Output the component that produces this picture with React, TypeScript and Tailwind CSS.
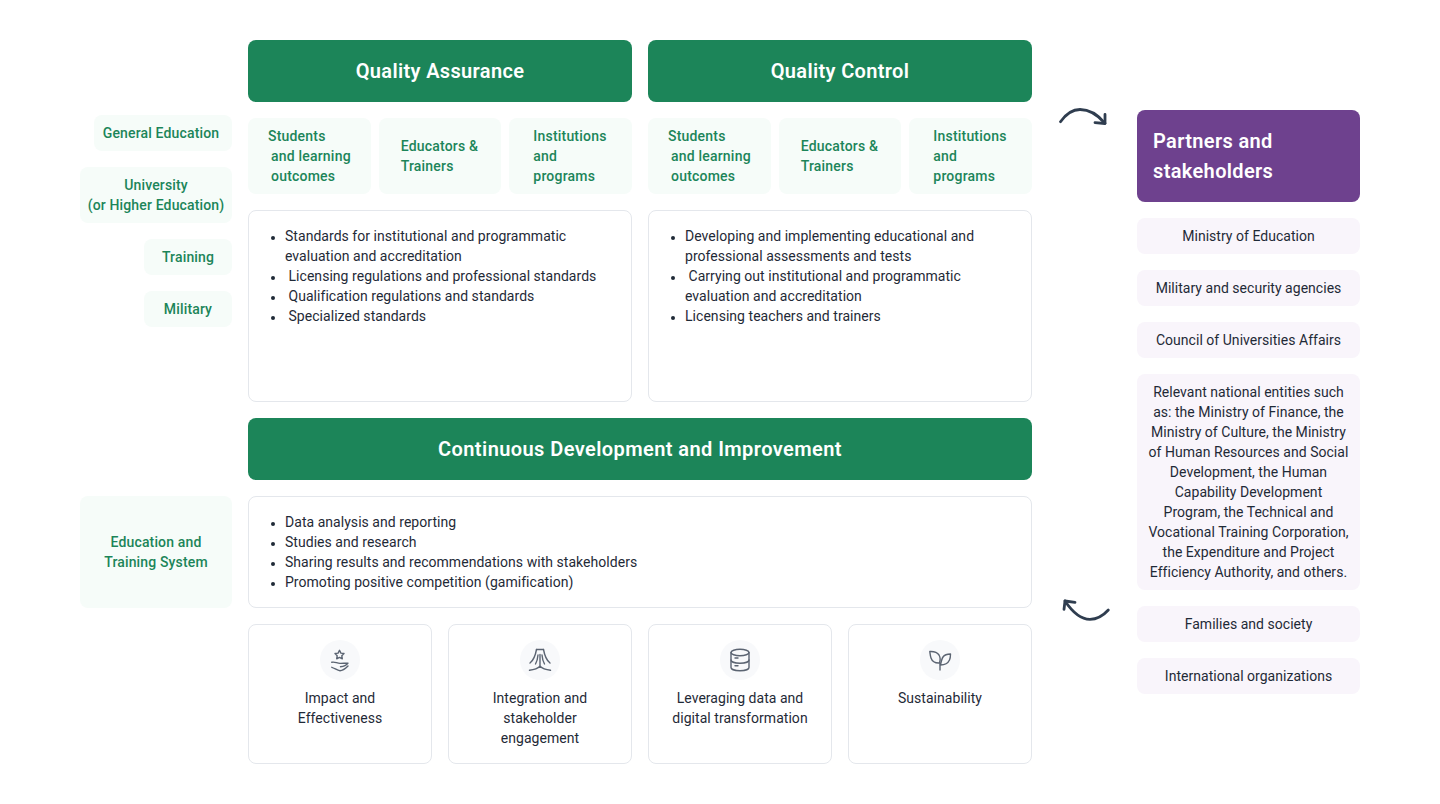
const font = { fontFamily: '"Roboto", "Liberation Sans", sans-serif' };

function HandStar() {
  return (
    <svg width="24" height="24" viewBox="0 0 24 24" fill="none" stroke="#5b6472" strokeWidth="1.4" strokeLinecap="round" strokeLinejoin="round">
      <path d="M11.500 2.300l1.400 2.800 3.100.4-2.200 2.200.5 3.100-2.800-1.400-2.800 1.400.5-3.100L7 5.500l3.100-.4z" />
      <path d="M3.800 14.300c3-.8 5 1 8.200 1.100 3 .1 5.500-.4 8-.2-1.500 2-4.500 3.300-7.500 3.600" />
      <path d="M3.800 19.300c3 .9 5.500 3.400 8.200 3.400 3 0 6-2.700 8-4.700" />
    </svg>
  );
}

function Fountain() {
  return (
    <svg width="24" height="24" viewBox="0 0 24 24" fill="none" stroke="#5b6472" strokeWidth="1.4" strokeLinecap="round" strokeLinejoin="round">
      <path d="M8.500 1.500h7" />
      <path d="M8.500 1.500C7.500 7 6 12 2 15M15.500 1.500c1 5.500 2.500 10.500 6.500 13.500" />
      <path d="M12 6.500V18M10 7c-.3 3.500-1 6.500-2.500 9M14 7c.3 3.500 1 6.500 2.500 9" />
      <path d="M1.500 22.300c4.500-.5 8-1.500 10.500-4 2.500 2.500 6 3.500 10.500 4" />
    </svg>
  );
}

function Db() {
  return (
    <svg width="24" height="24" viewBox="0 0 24 24" fill="none" stroke="#5b6472" strokeWidth="1.4" strokeLinecap="round" strokeLinejoin="round">
      <ellipse cx="12" cy="4.500" rx="9" ry="3.200" />
      <path d="M3 4.500v15c0 1.800 4 3.200 9 3.200s9-1.400 9-3.200v-15" />
      <path d="M3 12c0 1.800 4 3.200 9 3.200s9-1.400 9-3.200" />
      <path d="M7 10h3M7 17.800h3" />
    </svg>
  );
}

function Sprout() {
  return (
    <svg width="24" height="24" viewBox="0 0 24 24" fill="none" stroke="#5b6472" strokeWidth="1.4" strokeLinecap="round" strokeLinejoin="round">
      <path d="M12 22v-7" />
      <path d="M1.800 3.500c3.700-.2 7.200.4 9.200 3.500 1.500 2.500 1.300 5.500.5 8-3.500.2-7.300-1.500-8.500-5-.7-2-.9-4.400-1.200-6.500z" />
      <path d="M22.500 6c-2.800 0-5.800.6-7.500 3-1.300 2-1.900 4.800-2.500 8 3.500 0 7.300-1.300 9-5 .8-1.800 1-4 1-6z" />
    </svg>
  );
}

function Sub({ lines, pad }: { lines: React.ReactNode[]; pad: string }) {
  return (
    <div className={`flex items-center rounded-lg bg-[#f6fcf9] text-sm leading-5 font-medium tracking-[0.2px] whitespace-nowrap text-[#1c8559] ${pad}`}>
      <div>
        {lines.map((l, i) => (
          <div key={i}>{l}</div>
        ))}
      </div>
    </div>
  );
}

function Column({ title, items }: { title: string; items: string[] }) {
  return (
    <div className="flex w-[384px] flex-col gap-4">
      <div className="flex h-[62px] items-center justify-center rounded-lg bg-[#1c8559] text-xl font-semibold tracking-[0.35px] text-white">
        {title}
      </div>
      <div className="grid h-[76px] grid-cols-3 gap-2">
        <Sub
          pad="pl-5"
          lines={[
            "Students",
            <span className="ml-[3px]">and learning</span>,
            <span className="ml-[3px]">outcomes</span>,
          ]}
        />
        <Sub pad="pl-[22px]" lines={["Educators &", "Trainers"]} />
        <Sub pad="pl-6" lines={["Institutions", "and", "programs"]} />
      </div>
      <div className="h-[192px] rounded-lg border border-[#e4e7ec] bg-white px-6 pt-[15px]">
        <ul className="list-disc pl-3 text-sm leading-5 tracking-[0.04px] text-[#1f2a37] marker:text-[12px]">
          {items.map((t) => (
            <li key={t}>{t}</li>
          ))}
        </ul>
      </div>
    </div>
  );
}

function Pillar({ icon, lines }: { icon: React.ReactNode; lines: string[] }) {
  return (
    <div className="flex h-[140px] flex-1 flex-col items-center rounded-lg border border-[#e4e7ec] bg-white pt-[15px] text-center text-sm leading-5 tracking-[0.04px] text-[#1f2a37]">
      <div className="mb-2 flex size-10 items-center justify-center rounded-full bg-[#f8f9fb]">{icon}</div>
      {lines.map((l) => (
        <div key={l}>{l}</div>
      ))}
    </div>
  );
}

function Side({ className, children }: { className: string; children: React.ReactNode }) {
  return (
    <div className={`flex items-center justify-center rounded-lg bg-[#f6fcf9] text-center text-sm leading-5 font-medium tracking-[0.15px] whitespace-nowrap text-[#1c8559] ${className}`}>
      <div>{children}</div>
    </div>
  );
}

function Partner({ children, className = "" }: { children: React.ReactNode; className?: string }) {
  return (
    <div className={`flex items-center justify-center rounded-lg bg-[#f9f5fb] text-center text-sm leading-5 tracking-[0.03px] whitespace-nowrap text-[#1f2a37] ${className}`}>
      <div>{children}</div>
    </div>
  );
}

const entities = [
  "Relevant national entities such",
  "as: the Ministry of Finance, the",
  "Ministry of Culture, the Ministry",
  "of Human Resources and Social",
  "Development, the Human",
  "Capability Development",
  "Program, the Technical and",
  "Vocational Training Corporation,",
  "the Expenditure and Project",
  "Efficiency Authority, and others.",
];

export default function App() {
  return (
    <div style={font} className="flex h-[804px] w-[1440px] bg-white pt-10 pl-20">
      <div className="mr-4 flex w-[152px] flex-col items-end gap-4 pt-[75px]">
        <Side className="h-9 w-[138px] pr-1">General Education</Side>
        <Side className="h-14 w-[152px]">
          University
          <br />
          (or Higher Education)
        </Side>
        <Side className="h-9 w-[88px]">Training</Side>
        <Side className="h-9 w-[88px]">Military</Side>
        <Side className="mt-[153px] h-[112px] w-[152px]">
          Education and
          <br />
          Training System
        </Side>
      </div>

      <div className="flex w-[784px] flex-col gap-4">
        <div className="flex gap-4">
          <Column
            title="Quality Assurance"
            items={[
              "Standards for institutional and programmatic evaluation and accreditation",
              "\u00a0Licensing regulations and professional standards",
              "\u00a0Qualification regulations and standards",
              "\u00a0Specialized standards",
            ]}
          />
          <Column
            title="Quality Control"
            items={[
              "Developing and implementing educational and professional assessments and tests",
              "\u00a0Carrying out institutional and programmatic evaluation and accreditation",
              "Licensing teachers and trainers",
            ]}
          />
        </div>
        <div className="flex h-[62px] items-center justify-center rounded-lg bg-[#1c8559] text-xl font-semibold tracking-[0.42px] text-white">
          Continuous Development and Improvement
        </div>
        <div className="h-[112px] rounded-lg border border-[#e4e7ec] bg-white px-6 pt-[15px]">
          <ul className="list-disc pl-3 text-sm leading-5 tracking-[0.04px] text-[#1f2a37] marker:text-[12px]">
            <li>Data analysis and reporting</li>
            <li>Studies and research</li>
            <li>Sharing results and recommendations with stakeholders</li>
            <li>Promoting positive competition (gamification)</li>
          </ul>
        </div>
        <div className="flex gap-4">
          <Pillar icon={<HandStar />} lines={["Impact and", "Effectiveness"]} />
          <Pillar icon={<Fountain />} lines={["Integration and", "stakeholder", "engagement"]} />
          <Pillar icon={<Db />} lines={["Leveraging data and", "digital transformation"]} />
          <Pillar icon={<Sprout />} lines={["Sustainability"]} />
        </div>
      </div>

      <div className="flex w-[105px] flex-col pt-[66px] pl-[27px]">
        <svg width="50" height="22" viewBox="0 0 50 22" fill="none" stroke="#2f3d4f" strokeWidth="2.800" strokeLinecap="round" strokeLinejoin="round">
          <path d="M1.500 15.700C7 8 13 3.500 21 3.500c10 0 18 5.500 25 13.800" />
          <path d="M36 16.700l10 .8V8.500" />
        </svg>
        <svg className="mt-[468px] ml-[2px]" width="50" height="26" viewBox="0 0 50 26" fill="none" stroke="#2f3d4f" strokeWidth="2.800" strokeLinecap="round" strokeLinejoin="round">
          <path d="M47.300 14c-5 5.500-11 9.300-18.300 9.300C18 23.300 10 14 4 5" />
          <path d="M14 6.300L4 5l-1 8.300" />
        </svg>
      </div>

      <div className="flex w-[223px] flex-col gap-4 pt-[70px]">
        <div className="flex h-[92px] items-center rounded-lg bg-[#6e418e] px-4 text-xl leading-[30px] font-semibold tracking-[0.35px] text-white">
          <div>
            Partners and
            <br />
            stakeholders
          </div>
        </div>
        <Partner className="h-9">Ministry of Education</Partner>
        <Partner className="h-9">Military and security agencies</Partner>
        <Partner className="h-9">Council of Universities Affairs</Partner>
        <Partner className="h-[216px]">
          {entities.map((l) => (
            <div key={l}>{l}</div>
          ))}
        </Partner>
        <Partner className="h-9">Families and society</Partner>
        <Partner className="h-9">International organizations</Partner>
      </div>
    </div>
  );
}
